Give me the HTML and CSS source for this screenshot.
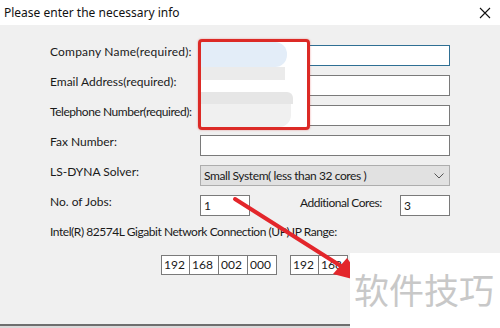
FILE: index.html
```html
<!DOCTYPE html>
<html>
<head>
<meta charset="utf-8">
<link rel="stylesheet" href="styles.css">
</head>
<body>
<div class="window">
  <div class="titlebar">
    <span class="title">Please enter the necessary info</span>
    <svg class="close" width="12" height="12" viewBox="0 0 12 12"><path d="M1 1 L11 11 M11 1 L1 11" stroke="#111" stroke-width="1.1" fill="none"/></svg>
  </div>
  <div class="content">
    <div class="form">
      <span class="lbl wide">Company Name(required):</span><div class="field focused"></div>
      <span class="lbl">Email Address(required):</span><div class="field"></div>
      <span class="lbl tight">Telephone Number(required):</span><div class="field"></div>
      <span class="lbl">Fax Number:</span><div class="field"></div>
      <span class="lbl">LS-DYNA Solver:</span>
      <div class="select"><span class="sel-text">Small System( less than 32 cores )</span>
        <svg class="chev" width="10" height="6" viewBox="0 0 10 6"><path d="M0.5 0.5 L5 5 L9.5 0.5" stroke="#555" stroke-width="1" fill="none"/></svg>
      </div>
      <span class="lbl">No. of Jobs:</span>
      <div class="jobs">
        <div class="field small">1</div>
        <span class="lbl cores">Additional Cores:</span>
        <div class="field small">3</div>
      </div>
    </div>
    <div class="nic">Intel(R) 82574L Gigabit Network Connection (UP) IP Range:</div>
    <div class="ip-row">
      <div class="ip-group"><div class="oct">192</div><div class="oct">168</div><div class="oct">002</div><div class="oct">000</div></div>
      <div class="ip-group"><div class="oct">192</div><div class="oct">168</div></div>
    </div>
  </div>
  <div class="bottom"></div>

  <div class="blur">
    <div class="b b1"></div>
    <div class="b b2"></div>
    <div class="b b3"></div>
    <div class="b b4"></div>
    <div class="b b5"></div>
  </div>
  <div class="redbox"></div>
  <svg class="arrow" width="500" height="328" viewBox="0 0 500 328">
    <path d="M235 199 L344 268" stroke="#e3262b" stroke-width="4" stroke-linecap="round" fill="none"/>
    <path d="M364 282 L333 274 L347 258 Z" fill="#e3262b"/>
  </svg>
  <div class="watermark">软件技巧</div>
</div>
</body>
</html>
```
FILE: styles.css
```css
* { box-sizing: border-box; }
html, body { margin: 0; padding: 0; }
body {
  width: 500px;
  height: 328px;
  overflow: hidden;
  background: #f0f0f0;
  font-family: "Lato", "Noto Sans", sans-serif;
  color: #1a1a1a;
}
.window {
  position: relative;
  width: 500px;
  height: 328px;
  display: flex;
  flex-direction: column;
}
.titlebar {
  height: 25px;
  background: #ffffff;
  display: flex;
  align-items: center;
  justify-content: space-between;
  padding: 0 9px 0 4px;
}
.title {
  font-family: "Noto Sans", sans-serif;
  font-size: 12px;
  color: #111;
}
.close { display: block; }
.content {
  flex: 1;
  background: #f0f0f0;
  padding-top: 20px;
}
.form {
  display: grid;
  grid-template-columns: 150px 250px;
  grid-auto-rows: 21px;
  row-gap: 9px;
  padding-left: 50px;
}
.lbl {
  font-size: 12px;
  line-height: 14px;
  align-self: start;
  white-space: nowrap;
}
.lbl.wide { letter-spacing: 0.2px; }
.lbl.tight { letter-spacing: -0.45px; }
.field {
  background: #ffffff;
  border: 1px solid #7a7a7a;
  height: 21px;
  font-size: 12px;
  line-height: 19px;
  padding-left: 3px;
}
.field.focused { border-color: #2f6f93; }
.select {
  background: #e1e1e1;
  border: 1px solid #adadad;
  display: flex;
  align-items: center;
  justify-content: space-between;
  padding: 0 5px 0 3px;
  font-size: 12px;
}
.sel-text { letter-spacing: -0.4px; }
.chev { display: block; }
.jobs {
  display: flex;
  align-items: flex-start;
}
.field.small { width: 50px; }
.cores { margin-left: 50px; margin-right: auto; padding-top: 1px; letter-spacing: -0.5px; }
.nic {
  margin-top: 9px;
  padding-left: 50px;
  font-size: 12px;
  line-height: 14px;
  letter-spacing: -0.45px;
}
.ip-row {
  margin-top: 16px;
  padding-left: 161px;
  display: flex;
  gap: 13px;
}
.ip-group { display: flex; }
.oct {
  width: 29px;
  height: 20px;
  background: #fff;
  border: 1px solid #7a7a7a;
  font-size: 12px;
  line-height: 18px;
  padding-left: 2px;
}
.oct + .oct { margin-left: -1px; width: 30px; }
.bottom {
  height: 4px;
  border-top: 2px solid #6e6e6e;
  background: #dadada;
}
.blur {
  position: absolute;
  left: 201px;
  top: 42px;
  width: 106px;
  height: 86px;
  background: #ffffff;
}
.b { position: absolute; left: 0; }
.b1 { top: 0; width: 86px; height: 25px; background: #e3edf8; border-radius: 0 12px 12px 0; }
.b2 { top: 25px; width: 84px; height: 13px; background: #ebebeb; }
.b3 { top: 38px; width: 106px; height: 12px; background: #ffffff; }
.b4 { top: 50px; width: 92px; height: 12px; background: #e6e6e6; border-radius: 0 6px 0 0; }
.b5 { top: 62px; width: 90px; height: 23px; background: #f0f0f0; border-radius: 0 0 12px 0; }
.redbox {
  position: absolute;
  left: 198px;
  top: 39px;
  width: 112px;
  height: 91px;
  border: 3px solid #dc2a26;
  border-radius: 4px;
  box-shadow: 0 0 2px rgba(220, 42, 38, 0.5);
}
.arrow {
  position: absolute;
  left: 0;
  top: 0;
}
.watermark {
  position: absolute;
  left: 350px;
  top: 253px;
  width: 150px;
  height: 75px;
  background: #ffffff;
  font-family: "Noto Sans CJK SC", sans-serif;
  font-size: 35px;
  color: #c8c8c8;
  padding-left: 4px;
  line-height: 72px;
}
```
